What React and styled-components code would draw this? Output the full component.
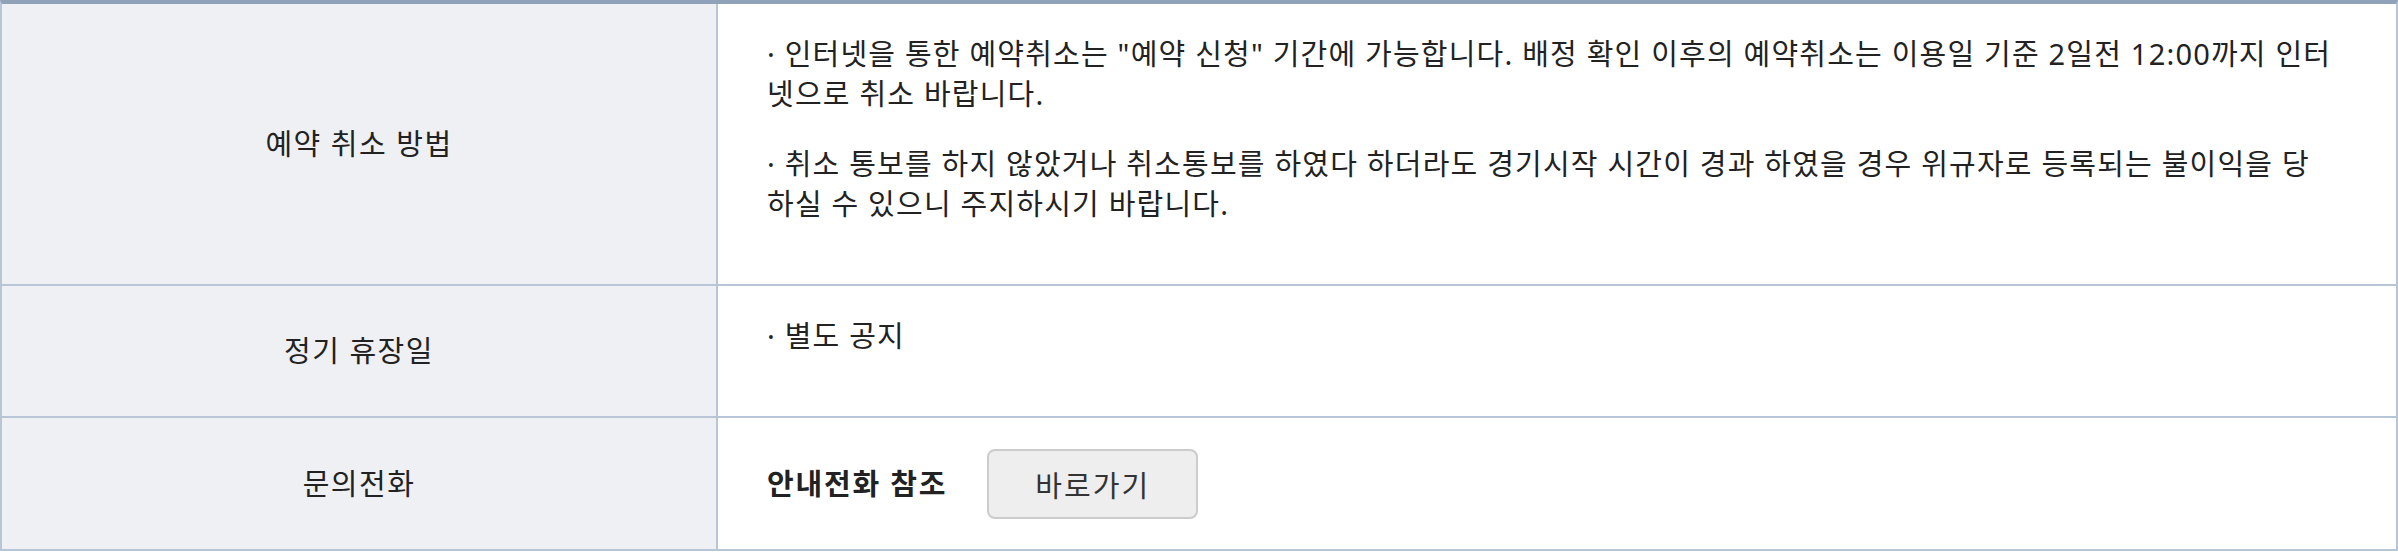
import React from 'react';
import styled, { createGlobalStyle } from 'styled-components';

const GlobalStyle = createGlobalStyle`
  html, body {
    margin: 0;
    padding: 0;
    background: #ffffff;
  }
  body {
    font-family: "Noto Sans", "Noto Sans CJK KR", sans-serif;
    color: #222222;
  }
`;

// outer table frame, dark line on top
const InfoTable = styled.div`
  width: 100%;
  box-sizing: border-box;
  border-top: 4px solid #8fa2ba;
  border-left: 2px solid #b8c5d6;
  border-right: 2px solid #b8c5d6;
`;

const Row = styled.div`
  display: grid;
  grid-template-columns: 716px 1fr;
  border-bottom: 2px solid #b8c5d6;
`;

const Label = styled.div`
  display: flex;
  align-items: center;
  justify-content: center;
  background: #eef0f4;
  border-right: 2px solid #b8c5d6;
  font-size: 29px;
  letter-spacing: 1.5px;
  line-height: 40px;
  color: #222;
`;

const Content = styled.div`
  padding: 30px 62px 30px 49px;
  font-size: 29px;
  letter-spacing: 1.2px;
  line-height: 40px;
  display: ${(p) => (p.$inline ? 'flex' : 'block')};
  align-items: center;
`;

const Para = styled.p`
  margin: 0 0 30px;
`;

const Strong = styled.strong`
  font-weight: 700;
  letter-spacing: 1.8px;
  margin-right: 40px;
`;

const GoButton = styled.button`
  width: 211px;
  height: 70px;
  margin-top: 1px;
  box-sizing: border-box;
  background: #eeeeee;
  border: 2px solid #cccccc;
  border-radius: 8px;
  font-family: inherit;
  font-size: 29px;
  letter-spacing: 2px;
  color: #333;
  cursor: pointer;
`;

const rows = [
  {
    label: '예약 취소 방법',
    items: [
      '· 인터넷을 통한 예약취소는 "예약 신청" 기간에 가능합니다. 배정 확인 이후의 예약취소는 이용일 기준 2일전 12:00까지 인터넷으로 취소 바랍니다.',
      '· 취소 통보를 하지 않았거나 취소통보를 하였다 하더라도 경기시작 시간이 경과 하였을 경우 위규자로 등록되는 불이익을 당하실 수 있으니 주지하시기 바랍니다.',
    ],
  },
  {
    label: '정기 휴장일',
    items: ['· 별도 공지'],
  },
];

export default function App() {
  return (
    <>
      <GlobalStyle />
      <InfoTable>
        {rows.map((r) => (
          <Row key={r.label}>
            <Label>{r.label}</Label>
            <Content>
              {r.items.map((t) => (
                <Para key={t}>{t}</Para>
              ))}
            </Content>
          </Row>
        ))}
        <Row>
          <Label>문의전화</Label>
          <Content $inline>
            <Strong>안내전화 참조</Strong>
            <GoButton type="button">바로가기</GoButton>
          </Content>
        </Row>
      </InfoTable>
    </>
  );
}
